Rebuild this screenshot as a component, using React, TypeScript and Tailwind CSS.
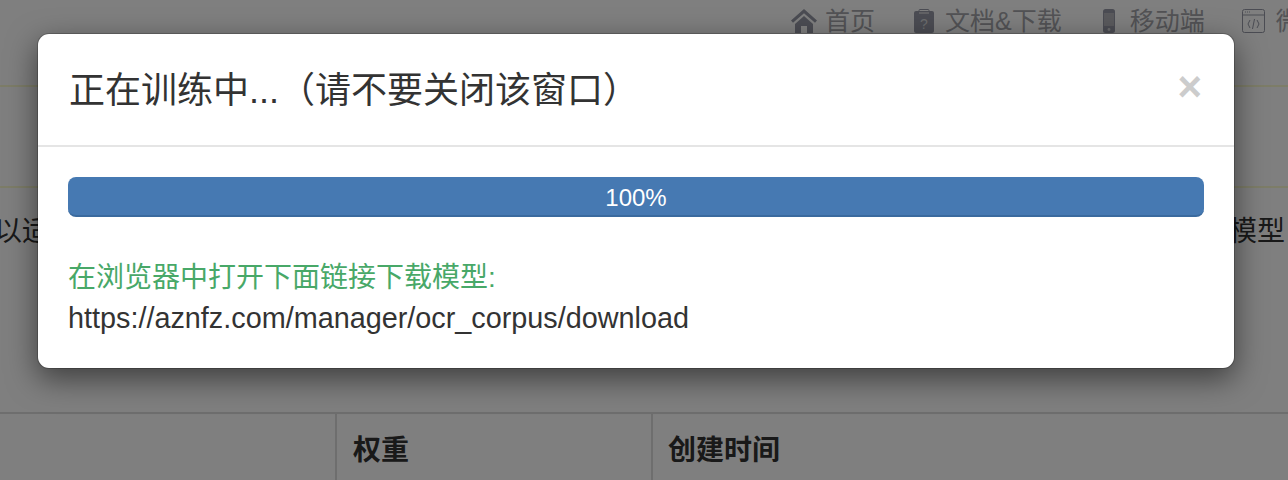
const font = "font-['Liberation_Sans','Noto_Sans_CJK_SC',sans-serif]";

function NavBar() {
  return (
    <div className="flex h-[85px] items-start gap-[39px] overflow-hidden bg-white pt-[6px] pl-[791px] whitespace-nowrap text-[25px] leading-[30px] text-[#a4a5aa]">
      <div className="flex shrink-0 items-center gap-[8px]">
        <svg width="26" height="24" viewBox="0 0 26 24" fill="#9699a6">
          <path d="M13 0 0 11.5l2 2.3L13 4.2l11 9.6 2-2.3z" />
          <path d="M13 7 4 15v9h6v-7h6v7h6v-9z" />
        </svg>
        <span>首页</span>
      </div>
      <div className="flex shrink-0 items-center gap-[11px]">
        <svg width="20" height="24" viewBox="0 0 20 24">
          <rect x="0" y="2" width="20" height="22" rx="2" fill="#9699a6" />
          <path d="M5 3V1.5Q5 .5 6 .5h8q1 0 1 1V3" fill="none" stroke="#9699a6" />
          <rect x="5" y="3" width="10" height="2" fill="#c4c5cb" />
          <text x="10" y="20" textAnchor="middle" fontSize="14" fill="#d8d8dc" fontFamily="Liberation Sans">?</text>
        </svg>
        <span>文档&amp;下载</span>
      </div>
      <div className="ml-[2px] flex shrink-0 items-center gap-[15px]">
        <svg width="12" height="24" viewBox="0 0 12 24">
          <rect width="12" height="24" rx="2.5" fill="#9699a6" />
          <rect x="1" y="4" width="10" height="13" fill="#b4b5bb" />
          <circle cx="6" cy="20.5" r="1.4" fill="#d8d8dc" />
        </svg>
        <span>移动端</span>
      </div>
      <div className="-ml-[2px] flex shrink-0 items-center gap-[11px]">
        <svg width="23" height="24" viewBox="0 0 23 24" fill="none" stroke="#9699a6">
          <rect x=".5" y=".5" width="22" height="23" rx="2" />
          <path d="M1 6h21" />
          <path d="M3 3h1M5 3h1M7 3h1" />
          <path d="M8 11l-2 4 2 4M15 11l2 4-2 4M12.5 10l-2 10" />
        </svg>
        <span>微信</span>
      </div>
    </div>
  );
}

function Background() {
  return (
    <div className={`h-[480px] w-[1288px] overflow-hidden bg-white text-[#333333] ${font}`}>
      <NavBar />
      <div className="h-[103px] border-y-2 border-y-[#fafad0] bg-white" />
      <div className="flex h-[224px] justify-between pt-[24px] pr-[3px] text-[28px] leading-[40px] whitespace-nowrap">
        <span className="-ml-[6px]">以适</span>
        <span>模型</span>
      </div>
      <div className="grid h-[68px] grid-cols-[335px_316px_1fr] border-t-2 border-t-[#dddddd] text-[28px] leading-[40px] font-bold">
        <div />
        <div className="border-l-2 border-l-[#dddddd] pt-[17px] pl-[16px]">权重</div>
        <div className="border-l-2 border-l-[#dddddd] pt-[17px] pl-[15px]">创建时间</div>
      </div>
    </div>
  );
}

export default function App() {
  return (
    <div className="relative h-[480px] w-[1288px] overflow-hidden">
      <Background />
      <div className="absolute inset-0 bg-black/50" />
      <div className={`absolute top-[33px] left-[37px] w-[1198px] rounded-[12px] border border-black/20 bg-white bg-clip-padding text-[#333333] shadow-[0_10px_30px_rgba(0,0,0,0.5)] ${font}`}>
        <div className="flex h-[113px] items-start justify-between border-b-2 border-b-[#e5e5e5] pt-[32px] pr-[32px] pl-[31px]">
          <h4 className="text-[36px] leading-[50px] font-normal">正在训练中...（请不要关闭该窗口）</h4>
          <span className="text-[42px] leading-[42px] font-bold text-[#cccccc]">×</span>
        </div>
        <div className="px-[30px] pt-[30px] pb-[30px]">
          <div className="h-[40px] rounded-[8px] border-b-2 border-b-[#3a6a9e] bg-[#4679b2] pt-[2px] text-center text-[24px] leading-[38px] text-white">
            100%
          </div>
          <div className="mt-[41px] text-[28px] leading-[40px] text-[#48a868]">在浏览器中打开下面链接下载模型:</div>
          <div className="text-[28.8px] leading-[40px] whitespace-nowrap">https://aznfz.com/manager/ocr_corpus/download</div>
        </div>
      </div>
    </div>
  );
}
